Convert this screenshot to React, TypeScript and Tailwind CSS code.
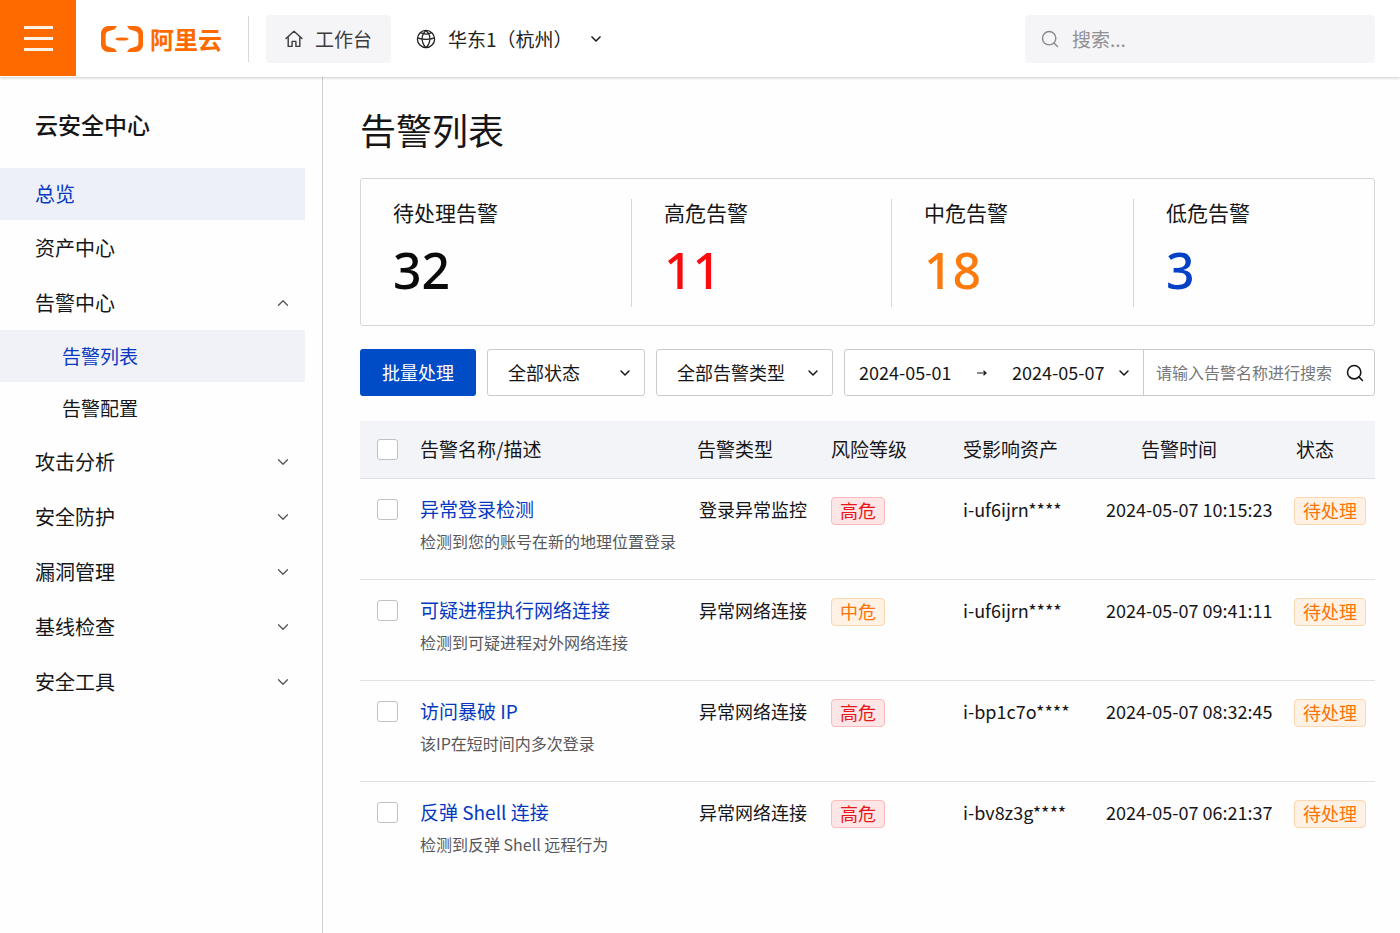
import { useState } from 'react';
import type { ReactNode } from 'react';
import { ChevronDown, ChevronUp, Search } from 'lucide-react';
import clsx from 'clsx';

type Level = '高危' | '中危';

interface Alert {
  id: number;
  name: string;
  description: string;
  type: string;
  level: Level;
  asset: string;
  time: string;
}

const ALERTS: Alert[] = [
  {
    id: 1,
    name: '异常登录检测',
    description: '检测到您的账号在新的地理位置登录',
    type: '登录异常监控',
    level: '高危',
    asset: 'i-uf6ijrn****',
    time: '2024-05-07 10:15:23',
  },
  {
    id: 2,
    name: '可疑进程执行网络连接',
    description: '检测到可疑进程对外网络连接',
    type: '异常网络连接',
    level: '中危',
    asset: 'i-uf6ijrn****',
    time: '2024-05-07 09:41:11',
  },
  {
    id: 3,
    name: '访问暴破 IP',
    description: '该IP在短时间内多次登录',
    type: '异常网络连接',
    level: '高危',
    asset: 'i-bp1c7o****',
    time: '2024-05-07 08:32:45',
  },
  {
    id: 4,
    name: '反弹 Shell 连接',
    description: '检测到反弹 Shell 远程行为',
    type: '异常网络连接',
    level: '高危',
    asset: 'i-bv8z3g****',
    time: '2024-05-07 06:21:37',
  },
];

const STATS = [
  { label: '待处理告警', value: 32, color: 'text-[#0a0a0a]' },
  { label: '高危告警', value: 11, color: 'text-[#fb0a0e]' },
  { label: '中危告警', value: 18, color: 'text-[#fd7a0c]' },
  { label: '低危告警', value: 3, color: 'text-[#0541c4]' },
];

const COLLAPSED_GROUPS = ['攻击分析', '安全防护', '漏洞管理', '基线检查', '安全工具'];

function HomeIcon() {
  return (
    <svg width="18" height="18" viewBox="0 0 18 18" fill="none" stroke="currentColor" strokeWidth="1.4" strokeLinejoin="round" strokeLinecap="round">
      <path d="M1 8.6 9 1.2l8 7.4M3.2 7.4v9h3.9v-5h3.8v5h3.9v-9" />
    </svg>
  );
}

function GlobeIcon() {
  return (
    <svg width="20" height="20" viewBox="0 0 20 20" fill="none" stroke="currentColor" strokeWidth="1.3">
      <circle cx="10" cy="10" r="8.6" />
      <path d="M10 1.4C4.8 6 4.8 13 10 18.8M10 1.4c5.2 4.6 5.2 11.6 0 17.4M1.5 8.800c4.800 2 12.200 2 17 0M4.400 3.700c3.400 1.700 7.800 1.700 11.200 0" />
    </svg>
  );
}

function LogoMark() {
  return (
    <svg width="42" height="26" viewBox="0 0 42 26" fill="#ff6a00">
      <path d="M16 0H7.5C3.4 0 0 3.4 0 7.5v11C0 22.6 3.4 26 7.5 26H16l-2.2-3.3-5.6-1.6C6 20.5 4.6 19.2 4.6 17V9c0-2.2 1.4-3.5 3.6-4.1l5.6-1.6z" />
      <path d="M26 0h8.5C38.6 0 42 3.4 42 7.5v11c0 4.1-3.4 7.5-7.5 7.5H26l2.2-3.3 5.6-1.6c2.2-.6 3.6-1.9 3.6-4.1V9c0-2.2-1.4-3.5-3.6-4.1l-5.6-1.6z" />
      <ellipse cx="21" cy="13" rx="6.6" ry="1.6" />
    </svg>
  );
}

function Header() {
  return (
    <header className="relative z-10 flex h-[77px] bg-white shadow-[0_1px_3px_rgba(0,0,0,0.2)]">
      <button aria-label="菜单" className="flex size-[76px] shrink-0 items-center justify-center bg-[#ff6a00]">
        <span className="flex w-[29px] flex-col gap-2">
          <span className="h-[3px] bg-[#fff3e6]" />
          <span className="h-[3px] bg-[#fff3e6]" />
          <span className="h-[3px] bg-[#fff3e6]" />
        </span>
      </button>

      <div className="flex flex-1 items-center pt-px">
        <a href="#" className="ml-[25px] flex items-center gap-[7px] text-2xl font-bold text-[#ff6a00]">
          <LogoMark />
          阿里云
        </a>

        <div className="ml-[26px] h-[46px] w-px bg-[#d9d9dc]" />

        <button className="ml-[17px] flex h-12 items-center gap-3 rounded-sm bg-[#f5f5f8] px-[19px] text-[19px] text-[#3c3c3e]">
          <HomeIcon />
          工作台
        </button>

        <label className="relative ml-[25px] flex items-center text-[#222]">
          <GlobeIcon />
          <select aria-label="地域" className="appearance-none bg-transparent pr-[31px] pl-3 text-[19px] outline-none">
            <option>华东1（杭州）</option>
          </select>
          <ChevronDown size={16} strokeWidth={2.5} className="pointer-events-none absolute right-0" />
        </label>

        <label className="mr-[25px] ml-auto flex h-12 w-[350px] items-center gap-3 rounded-sm bg-[#f5f5f7] px-[15px] text-[#8a8a8c]">
          <Search size={20} strokeWidth={1.7} />
          <input
            type="text"
            aria-label="搜索"
            placeholder="搜索..."
            className="min-w-0 flex-1 bg-transparent text-[19px] outline-none placeholder:text-[#919194]"
          />
        </label>
      </div>
    </header>
  );
}

function NavGroup({ label, open, children }: { label: string; open?: boolean; children?: ReactNode }) {
  const Icon = open ? ChevronUp : ChevronDown;
  return (
    <li>
      <button aria-expanded={!!open} className="flex h-[55px] w-full items-center justify-between pr-[13px] pl-[35px]">
        {label}
        <Icon size={18} strokeWidth={1.7} className="text-[#555]" />
      </button>
      {open && children}
    </li>
  );
}

function Sidebar() {
  return (
    <aside className="w-[323px] shrink-0 border-r border-[#cfcfd2] pr-[17px]">
      <h2 className="pt-[31px] pb-7 pl-[35px] text-[23px] leading-8 font-medium">云安全中心</h2>
      <nav className="text-xl">
        <ul>
          <li>
            <a href="#" className="flex h-[52px] items-center bg-[#eef0f9] pl-[35px] text-[#0639c0]">
              总览
            </a>
          </li>
          <li>
            <a href="#" className="flex h-[55px] items-center pl-[35px]">
              资产中心
            </a>
          </li>
          <NavGroup label="告警中心" open>
            <ul className="text-[19px]">
              <li>
                <a href="#" className="flex h-[52px] items-center bg-[#f1f2f8] pl-[62px] text-[#0639c0]">
                  告警列表
                </a>
              </li>
              <li>
                <a href="#" className="flex h-[52px] items-center pl-[62px]">
                  告警配置
                </a>
              </li>
            </ul>
          </NavGroup>
          {COLLAPSED_GROUPS.map((label) => (
            <NavGroup key={label} label={label} />
          ))}
        </ul>
      </nav>
    </aside>
  );
}

function Stats() {
  return (
    <section className="grid grid-cols-[270fr_260fr_242fr_241fr] rounded-[3px] border border-[#d5d6d8] pt-5 pb-[18px]">
      {STATS.map((stat, i) => (
        <div key={stat.label} className={clsx('h-[108px] pl-8', i > 0 && 'border-l border-[#d5d6d8]')}>
          <div className="text-[21px] leading-[26px]">{stat.label}</div>
          <div className={clsx("mt-[15px] font-['Noto_Sans',sans-serif] text-[50px] leading-[60px] font-medium", stat.color)}>
            {stat.value}
          </div>
        </div>
      ))}
    </section>
  );
}

function FilterSelect({ label, className }: { label: string; className: string }) {
  return (
    <div className={clsx('relative flex items-center', className)}>
      <select
        aria-label={label}
        className="h-full w-full appearance-none rounded-[3px] border border-[#cacbce] bg-white pr-10 pb-0.5 pl-5 outline-none"
      >
        <option>{label}</option>
      </select>
      <ChevronDown size={16} strokeWidth={2.2} className="pointer-events-none absolute right-3" />
    </div>
  );
}

function Filters() {
  const [from, setFrom] = useState('2024-05-01');
  const [to, setTo] = useState('2024-05-07');

  return (
    <div className="mt-[23px] flex h-[47px] gap-[11px] text-lg">
      <button className="w-[116px] shrink-0 rounded-[3px] bg-[#004bc6] pb-0.5 text-white">批量处理</button>
      <FilterSelect label="全部状态" className="w-[158px] shrink-0" />
      <FilterSelect label="全部告警类型" className="w-[177px] shrink-0" />

      <div className="flex min-w-0 flex-1 rounded-[3px] border border-[#cacbce] bg-white">
        <div className="flex shrink-0 items-center border-r border-[#cacbce] pr-[11px] pl-3.5">
          <input
            aria-label="开始日期"
            value={from}
            onChange={(e) => setFrom(e.target.value)}
            className="w-24 bg-transparent pb-0.5 outline-none"
          />
          <svg width="10" height="8" viewBox="0 0 10 8" fill="none" stroke="currentColor" strokeWidth="1.2" className="mr-[25px] ml-[22px]">
            <path d="M0 4h9M6.5 1.8 9 4 6.5 6.2" />
          </svg>
          <input
            aria-label="结束日期"
            value={to}
            onChange={(e) => setTo(e.target.value)}
            className="w-24 bg-transparent pb-0.5 outline-none"
          />
          <button aria-label="选择日期" className="ml-2">
            <ChevronDown size={16} strokeWidth={2.2} />
          </button>
        </div>
        <input
          type="text"
          aria-label="告警名称"
          placeholder="请输入告警名称进行搜索"
          className="min-w-0 flex-1 bg-transparent pb-0.5 pl-3 text-base outline-none placeholder:text-[#77777a]"
        />
        <button aria-label="查询" className="px-[9px]">
          <Search size={20} strokeWidth={1.9} />
        </button>
      </div>
    </div>
  );
}

function Checkbox({ label }: { label: string }) {
  return (
    <input
      type="checkbox"
      aria-label={label}
      className="block size-[21px] appearance-none rounded-[3px] border border-[#bfc1c5] bg-white checked:bg-[#004bc6]"
    />
  );
}

function Tag({ tone, children }: { tone: 'red' | 'orange'; children: ReactNode }) {
  return (
    <span
      className={clsx(
        'inline-flex h-7 items-center rounded border px-2 pb-0.5 align-top',
        tone === 'red' && 'border-[#fbb9bb] bg-[#fee6e6] text-[#e8161b]',
        tone === 'orange' && 'border-[#fdd5b0] bg-[#fff1e4] text-[#f97308]',
      )}
    >
      {children}
    </span>
  );
}

function AlertTable() {
  return (
    <table className="mt-[25px] w-full table-fixed text-left text-lg leading-7">
      <colgroup>
        <col className="w-[60px]" />
        <col />
        <col className="w-[134px]" />
        <col className="w-[132px]" />
        <col className="w-[143px]" />
        <col className="w-[188px]" />
        <col className="w-[81px]" />
      </colgroup>
      <thead>
        <tr className="h-[57px] border-b border-[#dcdfe3] bg-[#f3f4f8] text-[19px]">
          <th className="pl-[17px]">
            <Checkbox label="全选" />
          </th>
          <th className="font-normal">告警名称/描述</th>
          <th className="font-normal">告警类型</th>
          <th className="font-normal">风险等级</th>
          <th className="font-normal">受影响资产</th>
          <th className="pl-[35px] font-normal">告警时间</th>
          <th className="pl-0.5 font-normal">状态</th>
        </tr>
      </thead>
      <tbody>
        {ALERTS.map((alert) => (
          <tr key={alert.id} className="h-[101px] border-b border-[#e0e1e4] align-top last:border-b-0">
            <td className="pt-5 pl-[17px]">
              <Checkbox label={alert.name} />
            </td>
            <td className="pt-4">
              <a href="#" className="block text-[19px] text-[#0639c0]">
                {alert.name}
              </a>
              <p className="mt-1.5 text-base leading-6 text-[#58585b]">{alert.description}</p>
            </td>
            <td className="pt-4 pl-0.5">{alert.type}</td>
            <td className="pt-[18px]">
              <Tag tone={alert.level === '高危' ? 'red' : 'orange'}>{alert.level}</Tag>
            </td>
            <td className="pt-4">{alert.asset}</td>
            <td className="pt-4">{alert.time}</td>
            <td className="pt-[18px]">
              <Tag tone="orange">待处理</Tag>
            </td>
          </tr>
        ))}
      </tbody>
    </table>
  );
}

export default function App() {
  return (
    <div className="flex min-h-screen flex-col bg-[#fefefe] font-['Noto_Sans_CJK_SC',sans-serif] text-[#161618]">
      <Header />
      <div className="flex flex-1">
        <Sidebar />
        <main className="min-w-0 flex-1 pt-7 pr-[25px] pb-8 pl-[37px]">
          <h1 className="mb-[25px] text-4xl leading-[48px]">告警列表</h1>
          <Stats />
          <Filters />
          <AlertTable />
        </main>
      </div>
    </div>
  );
}
